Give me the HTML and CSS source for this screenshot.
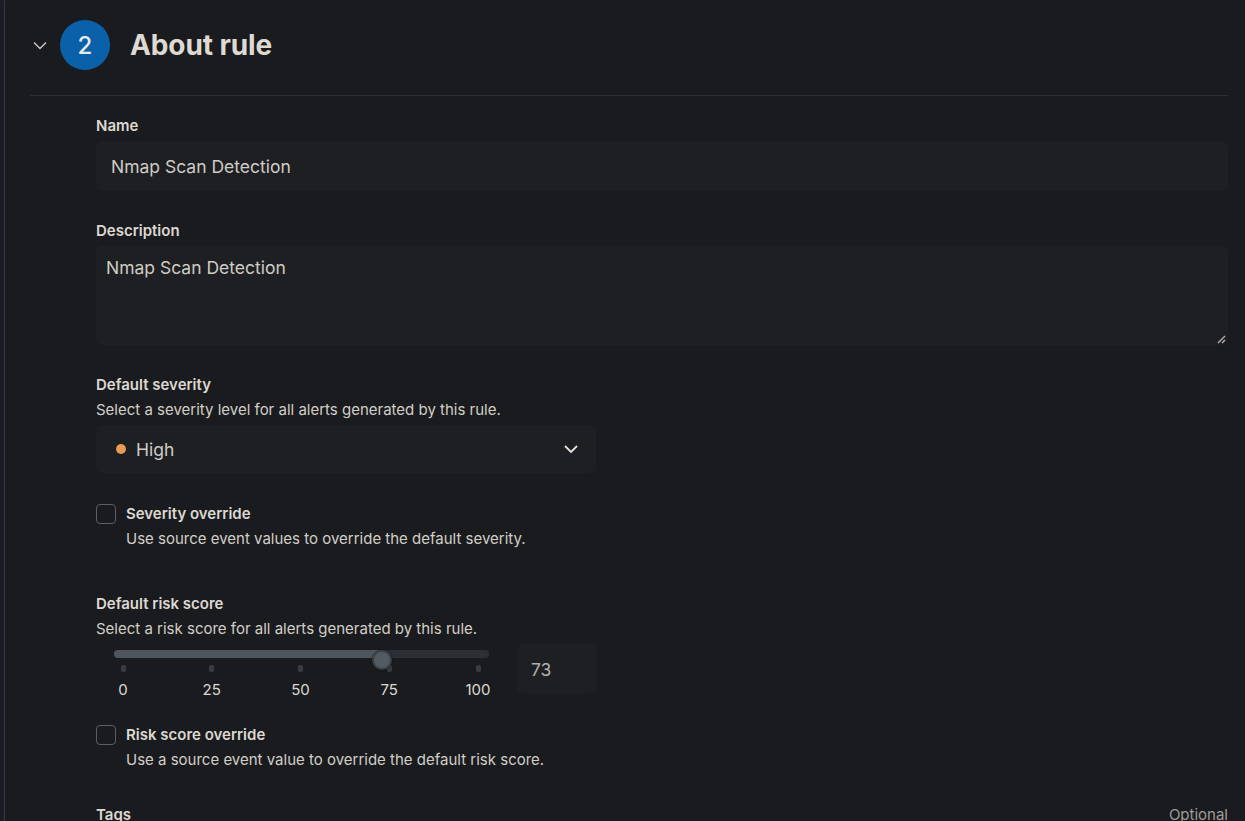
FILE: index.html
```html
<!DOCTYPE html>
<html lang="en">
<head>
<meta charset="utf-8">
<title>About rule</title>
<link rel="stylesheet" href="styles.css">
</head>
<body>
<section class="panel">
  <header class="step-header">
    <button class="collapse" aria-label="Collapse">
      <svg width="16" height="16" viewBox="0 0 16 16"><path d="M2 5.5 L8 11.5 L14 5.5" fill="none" stroke="#c9c6bf" stroke-width="1.5"/></svg>
    </button>
    <span class="step-num">2</span>
    <h2 class="step-title">About rule</h2>
  </header>
  <div class="divider"></div>
  <form class="form">
    <div class="row">
      <label class="label">Name</label>
      <div class="field text-field">Nmap Scan Detection</div>
    </div>
    <div class="row">
      <label class="label">Description</label>
      <div class="field area-field">
        <textarea class="area">Nmap Scan Detection</textarea>
        <svg class="grip" width="10" height="10" viewBox="0 0 10 10"><path d="M2 9 L9 2 M6 9 L9 6" stroke="#b9b6b0" stroke-width="1.3" fill="none"/></svg>
      </div>
    </div>
    <div class="row">
      <label class="label">Default severity</label>
      <p class="help">Select a severity level for all alerts generated by this rule.</p>
      <div class="field select-field">
        <span class="dot"></span>
        <span class="select-text">High</span>
        <svg class="select-arrow" width="16" height="16" viewBox="0 0 16 16"><path d="M2 5 L8 11 L14 5" fill="none" stroke="#e4e2dd" stroke-width="1.8"/></svg>
      </div>
    </div>
    <div class="check-row">
      <span class="checkbox"></span>
      <div class="check-text">
        <div class="check-label">Severity override</div>
        <p class="help">Use source event values to override the default severity.</p>
      </div>
    </div>
    <div class="row risk-row">
      <label class="label">Default risk score</label>
      <p class="help">Select a risk score for all alerts generated by this rule.</p>
      <div class="slider-row">
        <div class="slider">
          <div class="range">
            <div class="track"><div class="fill" style="width: calc(9px + 0.73 * (100% - 20px))"></div></div>
            <span class="thumb" style="left: 73%"></span>
            <div class="ticks">
              <div class="tick"><span class="tick-mark"></span><span class="tick-label">0</span></div>
              <div class="tick"><span class="tick-mark"></span><span class="tick-label">25</span></div>
              <div class="tick"><span class="tick-mark"></span><span class="tick-label">50</span></div>
              <div class="tick"><span class="tick-mark"></span><span class="tick-label">75</span></div>
              <div class="tick"><span class="tick-mark"></span><span class="tick-label">100</span></div>
            </div>
          </div>
        </div>
        <div class="field number-field">73</div>
      </div>
    </div>
    <div class="check-row check-row-risk">
      <span class="checkbox"></span>
      <div class="check-text">
        <div class="check-label">Risk score override</div>
        <p class="help">Use a source event value to override the default risk score.</p>
      </div>
    </div>
    <div class="tags-row">
      <label class="label">Tags</label>
      <span class="optional">Optional</span>
    </div>
  </form>
</section>
</body>
</html>
```

FILE: styles.css
```css
* { box-sizing: border-box; }
html, body { margin: 0; padding: 0; }
body {
  background: #1c1e22;
  font-family: Inter, "Noto Sans", "Liberation Sans", sans-serif;
  color: #d9d6cf;
  overflow: hidden;
  height: 821px;
}
.panel {
  margin: -5px 0 0 4px;
  width: 1250px;
  min-height: 900px;
  background: #1a1b1e;
  border: 1px solid #2a3d58;
  border-radius: 8px;
}
.step-header {
  display: flex;
  align-items: center;
  padding: 24px 0 0 27px;
  height: 74px;
}
.collapse {
  background: none;
  border: 0;
  padding: 0;
  width: 16px;
  height: 16px;
  display: flex;
  margin-right: 12px;
}
.step-num {
  width: 50px;
  height: 50px;
  border-radius: 50%;
  background: #0a61aa;
  color: #ebe9e4;
  display: flex;
  align-items: center;
  justify-content: center;
  font-size: 24px;
  font-weight: 500;
  margin-right: 20px;
}
.step-title {
  margin: 0;
  font-size: 28px;
  font-weight: 700;
  color: #dedad2;
  letter-spacing: -0.1px;
}
.divider {
  height: 1px;
  background: #2d2f35;
  margin: 25px 25px 0 25px;
}
.form {
  margin: 0 25px 0 91px;
  padding-top: 19px;
}
.row { margin-bottom: 29px; }
.label {
  display: block;
  font-size: 15px;
  line-height: 20px;
  padding-top: 1px;
  font-weight: 600;
  color: #dcd9d2;
}
.row > .label { margin-bottom: 5px; }
.row > .help { margin: -1px 0 4px; }
.help {
  margin: 4px 0 0;
  font-size: 15px;
  line-height: 22px;
  color: #d2cfc8;
}
.field {
  background: #1e1f22;
  border-radius: 6px;
  color: #cfccc5;
  font-size: 17.5px;
}
.text-field {
  height: 50px;
  display: flex;
  align-items: center;
  padding-left: 15px;
}
.area-field {
  position: relative;
  height: 99px;
}
.area {
  display: block;
  width: 100%;
  height: 100%;
  background: transparent;
  border: 0;
  resize: none;
  outline: none;
  font: inherit;
  color: inherit;
  padding: 11px 10px;
  line-height: 22px;
}
.grip {
  position: absolute;
  right: 2px;
  bottom: 1px;
}
.select-field {
  width: 500px;
  height: 48px;
  display: flex;
  align-items: center;
  padding: 0 17px 0 20px;
}
.dot {
  width: 10px;
  height: 10px;
  border-radius: 50%;
  background: #e79b55;
  margin-right: 10px;
}
.select-text { flex: 1; }
.select-arrow { display: block; }
.check-row {
  display: flex;
  align-items: flex-start;
  margin-top: 30px;
}
.check-row-risk { margin-top: 30px; }
.checkbox {
  width: 20px;
  height: 20px;
  border: 1.5px solid #5b5e64;
  border-radius: 4px;
  margin: 1px 10px 0 0;
  flex: none;
}
.check-label {
  font-size: 15px;
  line-height: 20px;
  padding-top: 1px;
  font-weight: 600;
  color: #dcd9d2;
}
.check-text .help { margin-top: 4px; }
.risk-row { margin-top: 43px; margin-bottom: 0; }
.slider-row {
  display: flex;
  align-items: flex-start;
  gap: 10px;
  height: 50px;
}
.slider {
  width: 411px;
  padding: 0 29px 0 27px;
}
.range { position: relative; }
.track {
  margin: 6px -11px 0 -9px;
  height: 8px;
  border-radius: 4px;
  background: #2c2f34;
  overflow: hidden;
}
.fill {
  height: 100%;
  background: #4e555c;
}
.thumb {
  position: absolute;
  top: 0;
  width: 20px;
  height: 20px;
  margin-left: -10px;
  border-radius: 50%;
  background: #535a62;
  border: 2px solid #3c4249;
  box-shadow: 0 0 2px rgba(0,0,0,0.6);
}
.ticks {
  display: flex;
  justify-content: space-between;
  margin-top: 7px;
}
.tick {
  width: 0;
  display: flex;
  flex-direction: column;
  align-items: center;
}
.tick-mark {
  width: 5px;
  height: 7px;
  border-radius: 2px;
  background: #383b40;
}
.tick-label {
  margin-top: 8px;
  font-size: 15px;
  line-height: 20px;
  color: #dcd9d2;
  white-space: nowrap;
}
.number-field {
  width: 80px;
  height: 50px;
  display: flex;
  align-items: center;
  padding-left: 14px;
  color: #b3b0aa;
}
.tags-row {
  display: flex;
  justify-content: space-between;
  align-items: center;
  margin-top: 33px;
}
.optional {
  font-size: 15px;
  line-height: 20px;
  color: #9f9d97;
}
```
